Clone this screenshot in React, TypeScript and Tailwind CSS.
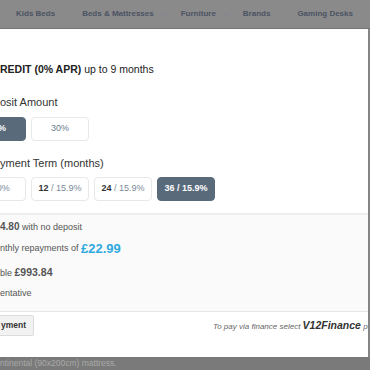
import React from "react";

const Chevron = () => (
  <svg width="7" height="5" viewBox="0 0 7 5" className="ml-[6px]" fill="none">
    <path d="M1 1.2 L3.5 3.6 L6 1.2" stroke="#7d8796" strokeWidth="0.9" />
  </svg>
);

const NavItem = ({ label, chevron = true }: { label: string; chevron?: boolean }) => (
  <div className="flex items-center">
    <span>{label}</span>
    {chevron && <Chevron />}
  </div>
);

const Opt = ({ a, b, selected }: { a: string; b?: string; selected?: boolean }) => (
  <div
    className={
      selected
        ? "w-[58px] h-[24px] shrink-0 flex items-center justify-center rounded-[4px] bg-[#596a7a] border border-[#596a7a] text-white font-bold text-[9px]"
        : "w-[58px] h-[24px] shrink-0 flex items-center justify-center rounded-[4px] bg-white border border-[#e8e8e8] text-[9px]"
    }
  >
    {b === undefined ? (
      <span className={selected ? "" : "text-[#6b7b8b]"}>{a}</span>
    ) : selected ? (
      <span>
        {a} / {b}
      </span>
    ) : (
      <span>
        <span className="font-bold text-[#333]">{a}</span>
        <span className="text-[#7a8a9a]"> / {b}</span>
      </span>
    )}
  </div>
);

export default function App() {
  return (
    <div
      className="w-[370px] h-[370px] overflow-hidden flex flex-col bg-[#858585]"
      style={{ fontFamily: '"Liberation Sans", Arial, sans-serif' }}
    >
      {/* nav under overlay */}
      <div className="h-[29px] shrink-0 bg-[#8a8a8a] border-b border-[#747474] flex items-center pl-[16px] gap-[14px] text-[8px] font-bold text-[#4a5364] whitespace-nowrap">
        <NavItem label="Kids Beds" />
        <NavItem label="Beds & Mattresses" />
        <NavItem label="Furniture" />
        <NavItem label="Brands" />
        <NavItem label="Gaming Desks" chevron={false} />
      </div>

      {/* modal */}
      <div className="w-[368px] h-[328px] shrink-0 bg-white overflow-hidden flex flex-col">
        <div className="mt-[33px] leading-[14px] text-[10.5px] text-[#222] whitespace-nowrap">
          <span className="font-bold">REDIT (0% APR)</span> up to 9 months
        </div>

        <div className="mt-[19px] leading-[14px] text-[11px] text-[#333] whitespace-nowrap">osit Amount</div>
        <div className="mt-[8px] flex gap-[5px] -ml-[32px]">
          <Opt a="10%" selected />
          <Opt a="30%" />
        </div>

        <div className="mt-[15px] leading-[14px] text-[11px] text-[#333] whitespace-nowrap">yment Term (months)</div>
        <div className="mt-[7px] flex gap-[5px] -ml-[32px]">
          <Opt a="9" b="0%" />
          <Opt a="12" b="15.9%" />
          <Opt a="24" b="15.9%" />
          <Opt a="36" b="15.9%" selected />
        </div>

        <div className="mt-[12px] h-[99px] shrink-0 bg-[#fafafa] border-t-2 border-[#eeeeee] border-b border-b-[#e6e6e6] flex flex-col text-[9px] text-[#555] whitespace-nowrap">
          <div className="mt-[6px] leading-[12px]">
            <span className="font-bold text-[10px] text-[#555]">4.80</span> with no deposit
          </div>
          <div className="mt-[6px] h-[20px] flex items-center">
            <span>nthly repayments of&nbsp;</span>
            <span className="font-bold text-[13px] text-[#2ea9e0]">£22.99</span>
          </div>
          <div className="mt-[6px] leading-[14px]">
            ble <span className="font-bold text-[10.5px] text-[#555]">£993.84</span>
          </div>
          <div className="mt-[7px] leading-[12px]">entative</div>
        </div>

        <div className="flex items-center pt-[3px] whitespace-nowrap">
          <div className="h-[21px] -ml-[2px] pl-[2px] pr-[7px] flex items-center bg-[#f2f2f2] border border-[#dcdcdc] rounded-[2px] text-[8.5px] font-bold text-[#333]">
            yment
          </div>
          <div className="ml-[179px] flex items-baseline italic text-[8px] text-[#666]">
            <span>To pay via finance select&nbsp;</span>
            <span className="font-bold text-[10.5px] text-[#333]">V12Finance</span>
            <span>&nbsp;payment option</span>
          </div>
        </div>
      </div>

      {/* page under overlay */}
      <div className="flex-1 bg-[#7a7a7a] text-[8.5px] text-[#a9a9a9] leading-[13px] whitespace-nowrap">
        ntinental (90x200cm) mattress.
      </div>
    </div>
  );
}
